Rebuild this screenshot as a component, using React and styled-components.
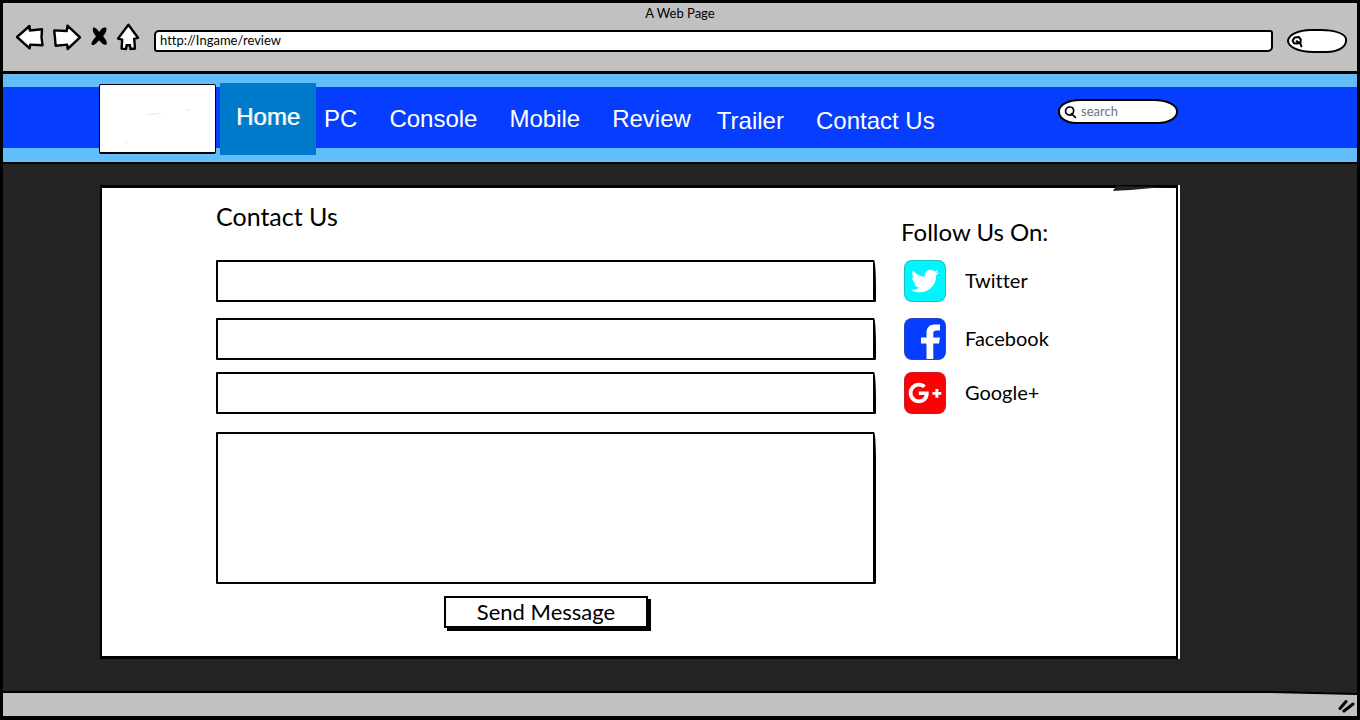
import React from "react";
import styled, { createGlobalStyle, css } from "styled-components";
import { FaTwitter, FaGooglePlusG } from "react-icons/fa";

const sketchFont = '"Lato", "Open Sans", sans-serif';

const GlobalStyle = createGlobalStyle`
  *, *::before, *::after { box-sizing: border-box; }
  body { margin: 0; background: #444; }
  button, input, textarea { font: inherit; color: inherit; }
`;

const Window = styled.div`
  display: flex;
  flex-direction: column;
  min-height: 100vh;
  border: solid #000;
  border-width: 3px 3px 4px;
  background: #232323;
  font-family: ${sketchFont};
  font-variant-ligatures: none;
  color: #000;
`;

const Chrome = styled.header`
  display: flex;
  flex-direction: column;
  height: 71px;
  border-bottom: 3px solid #000;
  background: #c1c1c1;
`;

const WindowTitle = styled.div`
  height: 20px;
  font-size: 13px;
  line-height: 20px;
  text-align: center;
`;

const Toolbar = styled.div`
  display: flex;
  align-items: center;
  height: 32px;
  padding: 0 10px 0 12px;
`;

const ToolButton = styled.button`
  display: block;
  padding: 0;
  border: 0;
  background: none;
  line-height: 0;
`;

const ToolButtons = styled.div`
  display: flex;
  align-items: center;
  gap: 7px;
  margin-right: 14px;
  padding-bottom: 4px;
`;

const Address = styled.input`
  flex: 1;
  min-width: 0;
  height: 22px;
  margin: 4px 14px 0 0;
  padding: 0 4px 2px;
  border: 2px solid #000;
  border-radius: 5px 3px 5px 3px;
  background: #fff;
  font-size: 13px;
  outline: 0;
`;

const pill = css`
  display: flex;
  align-items: center;
  border: 2px solid #000;
  background: #fff;
`;

const ChromeSearch = styled.label`
  ${pill}
  width: 60px;
  height: 24px;
  margin-top: 4px;
  padding-left: 2px;
  border-radius: 24px 26px 20px 26px / 12px 10px 12px 12px;
`;

const SiteSearch = styled.label`
  ${pill}
  width: 120px;
  height: 25px;
  margin: 16px 0 0 auto;
  padding-left: 4px;
  border-radius: 22px 24px 20px 18px / 12px;
  color: #6f7478;
`;

const SearchInput = styled.input`
  flex: 1;
  min-width: 0;
  padding: 0 4px 2px;
  border: 0;
  background: none;
  font-size: 13px;
  line-height: 16px;
  outline: 0;
  &::placeholder { color: #6f7478; opacity: 1; }
`;

const SiteBar = styled.div`
  display: flex;
  align-items: flex-start;
  height: 90px;
  padding: 9px 179px 0 96px;
  border-bottom: 2px solid #000;
  background: linear-gradient(#62befb 13px, #073dff 13px, #073dff 74px, #62befb 74px);
`;

const Logo = styled.a`
  flex: none;
  width: 117px;
  height: 70px;
  margin-top: 1px;
  border: 1px solid #000;
  border-bottom-width: 2px;
  border-radius: 2px;
  background: #fff;
`;

const Nav = styled.nav`
  display: flex;
  align-items: flex-start;
  margin-left: 4px;
  font-family: "Liberation Sans", Arial, sans-serif;
  font-size: 24px;
  line-height: 28px;
  white-space: nowrap;
`;

const NavGroup = styled.div`
  display: flex;
  gap: 32px;
  padding: ${(p) => (p.$low ? "24px 0 0 26px" : "22px 0 0 8px")};
`;

const NavLink = styled.a`
  color: #fff;
  text-decoration: none;
`;

const ActiveLink = styled(NavLink)`
  height: 72px;
  padding: 20px 16px;
  background: #007acb;
  text-shadow: 1px 0 rgba(255, 255, 255, 0.5);
`;

const Content = styled.main`
  flex: 1;
  padding: 21px 179px 32px 97px;
`;

const Panel = styled.section`
  position: relative;
  display: grid;
  grid-template-columns: minmax(0, 1fr) 275px;
  column-gap: 25px;
  padding: 0 0 28px 114px;
  border: 2px solid #000;
  border-width: 3px 2px 3px 2px;
  background: #fff;
  box-shadow: 2px 0 #fff;
`;

const Smudge = styled.svg`
  position: absolute;
  top: -3px;
  right: 9px;
`;

const Form = styled.form`
  display: flex;
  flex-direction: column;
`;

const Heading = styled.h1`
  margin: 14px 0 30px;
  font-size: 25px;
  line-height: 28px;
  font-weight: 400;
`;

const fieldStyle = css`
  display: block;
  width: 100%;
  padding: 8px 12px;
  border: 2px solid #000;
  border-right-width: 3px;
  border-radius: 1px 2px 1px 1px / 1px 30px 1px 1px;
  background: #fff;
  font-size: 18px;
  outline: 0;
`;

const Field = styled.input`
  ${fieldStyle}
  height: 42px;
  margin-bottom: ${(p) => p.$gap}px;
`;

const Message = styled.textarea`
  ${fieldStyle}
  height: 152px;
  resize: none;
`;

const SendButton = styled.button`
  align-self: center;
  width: 204px;
  height: 32px;
  margin-top: 12px;
  padding: 0;
  border: 2px solid #000;
  background: #fff;
  box-shadow: 3px 3px #000;
  font-size: 22px;
  line-height: 28px;
`;

const Follow = styled.aside`
  padding-top: 30px;
`;

const FollowHeading = styled.h2`
  margin: 0 0 14px;
  font-size: 24px;
  line-height: 28px;
  font-weight: 400;
`;

const SocialLink = styled.a`
  display: flex;
  align-items: center;
  gap: 19px;
  height: 42px;
  margin: 0 0 ${(p) => p.$gap}px 3px;
  color: #000;
  font-size: 20px;
  line-height: 24px;
  text-decoration: none;
`;

const SocialName = styled.span`
  padding-bottom: 3px;
`;

const Badge = styled.span`
  display: flex;
  align-items: center;
  justify-content: center;
  width: 42px;
  height: 42px;
  border: 1px solid rgba(90, 90, 90, 0.35);
  border-radius: 8px;
  background: ${(p) => p.$color};
  color: #fff;
`;

const StatusBar = styled.footer`
  position: relative;
  display: flex;
  align-items: center;
  justify-content: flex-end;
  height: 25px;
  padding: 3px 2px 0 0;
  border-top: 2px solid #000;
  background: #c1c1c1;
`;

const Slope = styled.svg`
  position: absolute;
  top: -2px;
  right: 0;
`;

const Outline = ({ d, width = 30 }) => (
  <svg width={width} height="30" viewBox={`0 0 ${width} 30`} fill="#fff" stroke="#000" strokeWidth="2.4" strokeLinejoin="round" aria-hidden="true">
    <path d={d} />
  </svg>
);

const Lens = () => (
  <svg width="13" height="14" viewBox="0 0 13 14" fill="none" stroke="#000" strokeWidth="1.7" strokeLinecap="round" aria-hidden="true">
    <path d="M5.8 2C8.3 1.9 10 3.6 9.6 6.3C9.2 9 7.5 10.3 5.1 10C2.6 9.7 1.3 7.8 1.6 5.6C1.9 3.5 3.5 2.1 5.8 2ZM7.4 8.6L11.4 12.4" />
  </svg>
);

const ChromeLens = () => (
  <svg width="12" height="13" viewBox="0 0 12 13" fill="none" stroke="#000" strokeWidth="2" strokeLinecap="round" strokeLinejoin="round" aria-hidden="true">
    <path d="M3.8 2.4L8 2L9.8 4.6L9.4 7.6L6.2 8.6L3 8.2L1.6 5.4ZM5.6 6.2L9.4 8.6L10.4 11.4" />
  </svg>
);

const FacebookMark = () => (
  <svg width="40" height="40" viewBox="0 0 40 40" fill="currentColor" aria-hidden="true">
    <path d="M21.5 40V24.500H16V18.500H21.500V14C21.500 8.500 24.500 5.500 29.500 5.500H35V11.500H31.500C29 11.500 28.300 12.500 28.300 14.800V18.500H35L34 24.500H28.300V40Z" />
  </svg>
);

const mainLinks = ["PC", "Console", "Mobile", "Review"];
const moreLinks = ["Trailer", "Contact Us"];

export default function App() {
  return (
    <>
      <GlobalStyle />
      <Window>
        <Chrome>
          <WindowTitle>A Web Page</WindowTitle>
          <Toolbar>
            <ToolButtons>
              <ToolButton aria-label="Back">
                <Outline d="M2 15L14.5 4L14.8 8.5L27 7.3L26.500 15.2L27.500 23.2L15.2 22.600L14.600 26.3Z" />
              </ToolButton>
              <ToolButton aria-label="Forward">
                <Outline d="M2.2 8.4L14.7 9L15.5 3.6L28 15.4L15.6 27L15.2 22.6L3.6 23.7L2.9 15Z" />
              </ToolButton>
              <ToolButton aria-label="Stop">
                <svg width="20" height="30" viewBox="0 0 20 30" aria-hidden="true">
                  <path d="M4 5.5C6.800 5 8.800 7.5 10.200 10C11.8 6.800 14.8 4.500 17.500 6C17.800 9 16 12 14 14.200C16 16.3 18.600 19 17.600 22.7C14.4 23.400 12 20.4 10 18.200C7.8 21 5.3 23.8 2.600 22.800C2 20 4.8 16.800 7 14.4C4.800 11.8 3 8.8 4 5.5Z" />
                </svg>
              </ToolButton>
              <ToolButton aria-label="Home">
                <Outline width={24} d="M12.4 2.700L22 15.8L18.200 16.600L19 26.500L14.4 27L14 23.2L10.6 23.2L10 27L5.6 26.600L6.2 17.6L2 16.6Z" />
              </ToolButton>
            </ToolButtons>
            <Address aria-label="Address" defaultValue="http://Ingame/review" />
            <ChromeSearch>
              <ChromeLens />
              <SearchInput aria-label="Web search" />
            </ChromeSearch>
          </Toolbar>
        </Chrome>

        <SiteBar>
          <Logo href="#" aria-label="Ingame">
            <svg width="115" height="67" viewBox="0 0 115 67" aria-hidden="true">
              <path d="M43 30L56 28L64 28L52 30ZM86 25L91 24L88 26ZM25 57L28 56L27 58Z" fill="#e4e8f6" />
            </svg>
          </Logo>
          <Nav>
            <ActiveLink href="#home">Home</ActiveLink>
            <NavGroup>
              {mainLinks.map((name) => (
                <NavLink key={name} href="#">{name}</NavLink>
              ))}
            </NavGroup>
            <NavGroup $low>
              {moreLinks.map((name) => (
                <NavLink key={name} href="#">{name}</NavLink>
              ))}
            </NavGroup>
          </Nav>
          <SiteSearch>
            <Lens />
            <SearchInput aria-label="Search" placeholder="search" />
          </SiteSearch>
        </SiteBar>

        <Content>
          <Panel>
            <Smudge width="54" height="7" viewBox="0 0 54 7" aria-hidden="true">
              <path d="M3 1L52 2L34 3.500L18 5L8 5.500L0 6Z" fill="#222" />
            </Smudge>
            <Form onSubmit={(e) => e.preventDefault()}>
              <Heading>Contact Us</Heading>
              <Field aria-label="Name" $gap={16} />
              <Field aria-label="Email" $gap={12} />
              <Field aria-label="Subject" $gap={18} />
              <Message aria-label="Message" />
              <SendButton>Send Message</SendButton>
            </Form>
            <Follow>
              <FollowHeading>Follow Us On:</FollowHeading>
              <SocialLink href="#" $gap={16}>
                <Badge $color="#00f5ff"><FaTwitter size={28} /></Badge>
                <SocialName>Twitter</SocialName>
              </SocialLink>
              <SocialLink href="#" $gap={12}>
                <Badge $color="#073dff"><FacebookMark /></Badge>
                <SocialName>Facebook</SocialName>
              </SocialLink>
              <SocialLink href="#" $gap={0}>
                <Badge $color="#fb0207"><FaGooglePlusG size={34} /></Badge>
                <SocialName>Google+</SocialName>
              </SocialLink>
            </Follow>
          </Panel>
        </Content>

        <StatusBar>
          <Slope width="90" height="5" viewBox="0 0 90 5" aria-hidden="true">
            <path d="M0 0H90V3Z" fill="#232323" />
            <path d="M0 1L90 3" stroke="#000" strokeWidth="2" />
          </Slope>
          <svg width="17" height="14" viewBox="0 0 17 14" fill="none" stroke="#000" strokeWidth="3" strokeLinecap="round" aria-hidden="true">
            <path d="M2 9.500L8 2.500M6 12L15 5" />
          </svg>
        </StatusBar>
      </Window>
    </>
  );
}
